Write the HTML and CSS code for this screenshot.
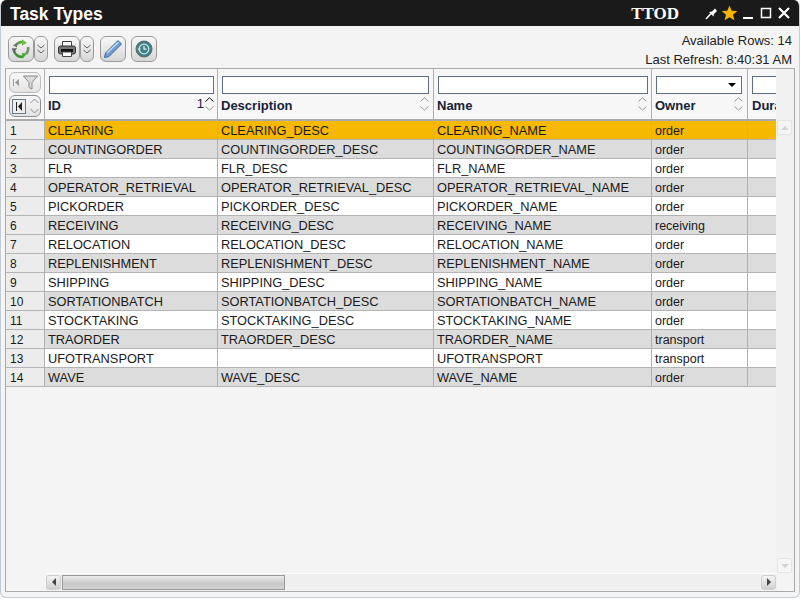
FILE: index.html
```html
<!DOCTYPE html>
<html lang="en">
<head>
<meta charset="utf-8">
<title>Task Types</title>
<link rel="stylesheet" href="styles.css">
</head>
<body>
<div class="window">
  <header class="titlebar">
    <span class="title">Task Types</span>
    <span class="tenant">TTOD</span>
    <div class="winbtns">
      <svg width="13" height="13" viewBox="0 0 13 13"><path d="M1 12 6 6.500" stroke="#fff" stroke-width="1.500"/><path d="M4 5 8.500 9.500 9 7 12 4 10 1.500 7 4.500z" fill="#fff"/></svg>
      <svg width="17" height="16" viewBox="0 0 17 16"><path d="M8.500 .5 10.700 5.700 16.300 6.100 12 9.700 13.400 15.200 8.500 12.200 3.600 15.200 5 9.700 .7 6.100 6.300 5.700z" fill="#f5b400"/></svg>
      <svg width="12" height="12" viewBox="0 0 12 12"><path d="M1 11h10" stroke="#fff" stroke-width="2"/></svg>
      <svg width="12" height="12" viewBox="0 0 12 12"><path d="M1.500 1.500h9v9h-9z" fill="none" stroke="#fff" stroke-width="1.500"/></svg>
      <svg width="12" height="12" viewBox="0 0 12 12"><path d="M1 1 11 11M11 1 1 11" stroke="#fff" stroke-width="2.200"/></svg>
    </div>
  </header>
  <div class="toolbar">
    <div class="tools">
      <div class="toolgroup">
        <button class="tbtn"><svg width="20" height="20" viewBox="0 0 20 20" fill="none" stroke-width="2.500"><path d="M5 6.500A7 7 0 0 1 12 3" stroke="#5aa83c"/><path d="M17 8A7.500 7.500 0 0 1 15 15" stroke="#7b8a78"/><path d="M12 17.500A7.500 7.500 0 0 1 3 12" stroke="#3f8f35"/><path d="M11 .3 16 4 11 6.500z" fill="#6cc04a" stroke="none"/><path d="M.5 9.500 6 9 3 14.500z" fill="#6d6d6d" stroke="none"/><path d="M11 14 16 14.500 11.500 19.700z" fill="#4aa83a" stroke="none"/><path d="M2 6.500 6 3.500 6 8.500z" fill="#6d7d68" stroke="none"/></svg></button>
        <button class="tmenu"><svg width="8" height="12" viewBox="0 0 8 12" fill="none" stroke="#666"><path d="M.5 2 4 5 7.500 2M.5 7 4 10 7.500 7"/></svg></button>
      </div>
      <div class="toolgroup">
        <button class="tbtn"><svg width="18" height="16" viewBox="0 0 18 16"><path d="M4.500 .5h9v5h-9z" fill="#fff" stroke="#444"/><rect x=".5" y="5" width="17" height="8" rx="2" fill="#777" stroke="#333"/><rect x="3" y="8" width="12" height="3" fill="#111"/><path d="M4.500 11h9v4.500h-9z" fill="#fff" stroke="#444"/></svg></button>
        <button class="tmenu"><svg width="8" height="12" viewBox="0 0 8 12" fill="none" stroke="#666"><path d="M.5 2 4 5 7.500 2M.5 7 4 10 7.500 7"/></svg></button>
      </div>
      <button class="tbtn"><svg width="20" height="20" viewBox="0 0 20 20"><path d="M15 1.500 18.500 5 6 17.500 1.500 18.500 2.500 14z" fill="#6f9fd0" stroke="#3f6a98"/><path d="M4 14 15.500 3" stroke="#cfe2f5" stroke-width="1.200"/></svg></button>
      <button class="tbtn tbtn-last"><svg width="18" height="18" viewBox="0 0 18 18"><circle cx="9" cy="9" r="8" fill="#3f7f86" stroke="#5d6a6e"/><circle cx="9" cy="9" r="4.800" fill="none" stroke="#cfe3e6" stroke-width="1.300"/><path d="M9 6v3.200h2.500" fill="none" stroke="#e8f2f3" stroke-width="1.200"/><path d="M2.500 8.500h3.500L4.200 11z" fill="#cfe3e6"/></svg></button>
    </div>
    <div class="status">
      <div>Available Rows: 14</div>
      <div>Last Refresh: 8:40:31 AM</div>
    </div>
  </div>
  <div class="panel">
    <div class="panel-top">
      <div class="viewport">
        <div class="row head">
          <div class="cell c0 headtools">
            <div class="hbtn hbtn-top">
              <svg width="8" height="9" viewBox="0 0 8 9"><path d="M1.500 1v7" stroke="#999"/><path d="M7 1v7L3 4.500z" fill="#999"/></svg>
              <svg width="15" height="15" viewBox="0 0 15 15"><path d="M.5 1h14L9 7.500V14L6 12.500v-5z" fill="#d8dcdc" stroke="#888"/></svg>
            </div>
            <div class="hbtn hbtn-bot">
              <span class="firstcol"><svg width="8" height="9" viewBox="0 0 8 9"><path d="M1.500 0v9" stroke="#222"/><path d="M7 0v9L3 4.500z" fill="#222"/></svg></span>
              <svg class="updown" width="9" height="16" viewBox="0 0 9 16" fill="none" stroke="#889"><path d="M.5 5 4.500 1 8.500 5M.5 11 4.500 15 8.500 11"/></svg>
            </div>
          </div>
          <div class="cell c1 hcell">
            <input class="filter" type="text" aria-label="ID filter">
            <div class="hlabel"><span>ID</span><span class="sortnum">1</span><svg class="sort" width="9" height="14" viewBox="0 0 9 14" fill="none"><path d="M.5 4.500 4.500 .8 8.500 4.500" stroke="#111"/><path d="M.5 9.500 4.500 13 8.500 9.500" stroke="#999"/></svg></div>
          </div>
          <div class="cell c2 hcell">
            <input class="filter" type="text" aria-label="Description filter">
            <div class="hlabel"><span>Description</span><svg class="sort" width="9" height="14" viewBox="0 0 9 14" fill="none" stroke="#999"><path d="M.5 4.500 4.500 .8 8.500 4.500M.5 9.500 4.500 13 8.500 9.500"/></svg></div>
          </div>
          <div class="cell c3 hcell">
            <input class="filter" type="text" aria-label="Name filter">
            <div class="hlabel"><span>Name</span><svg class="sort" width="9" height="14" viewBox="0 0 9 14" fill="none" stroke="#999"><path d="M.5 4.500 4.500 .8 8.500 4.500M.5 9.500 4.500 13 8.500 9.500"/></svg></div>
          </div>
          <div class="cell c4 hcell">
            <div class="filter select"><i class="caret"></i></div>
            <div class="hlabel"><span>Owner</span><svg class="sort" width="9" height="14" viewBox="0 0 9 14" fill="none" stroke="#999"><path d="M.5 4.500 4.500 .8 8.500 4.500M.5 9.500 4.500 13 8.500 9.500"/></svg></div>
          </div>
          <div class="cell c5 hcell">
            <input class="filter" type="text" aria-label="Duration filter">
            <div class="hlabel"><span>Duration</span></div>
          </div>
        </div>
        <div class="row sel"><div class="cell c0">1</div><div class="cell c1">CLEARING</div><div class="cell c2">CLEARING_DESC</div><div class="cell c3">CLEARING_NAME</div><div class="cell c4">order</div><div class="cell c5"></div></div>
        <div class="row alt"><div class="cell c0">2</div><div class="cell c1">COUNTINGORDER</div><div class="cell c2">COUNTINGORDER_DESC</div><div class="cell c3">COUNTINGORDER_NAME</div><div class="cell c4">order</div><div class="cell c5"></div></div>
        <div class="row"><div class="cell c0">3</div><div class="cell c1">FLR</div><div class="cell c2">FLR_DESC</div><div class="cell c3">FLR_NAME</div><div class="cell c4">order</div><div class="cell c5"></div></div>
        <div class="row alt"><div class="cell c0">4</div><div class="cell c1">OPERATOR_RETRIEVAL</div><div class="cell c2">OPERATOR_RETRIEVAL_DESC</div><div class="cell c3">OPERATOR_RETRIEVAL_NAME</div><div class="cell c4">order</div><div class="cell c5"></div></div>
        <div class="row"><div class="cell c0">5</div><div class="cell c1">PICKORDER</div><div class="cell c2">PICKORDER_DESC</div><div class="cell c3">PICKORDER_NAME</div><div class="cell c4">order</div><div class="cell c5"></div></div>
        <div class="row alt"><div class="cell c0">6</div><div class="cell c1">RECEIVING</div><div class="cell c2">RECEIVING_DESC</div><div class="cell c3">RECEIVING_NAME</div><div class="cell c4">receiving</div><div class="cell c5"></div></div>
        <div class="row"><div class="cell c0">7</div><div class="cell c1">RELOCATION</div><div class="cell c2">RELOCATION_DESC</div><div class="cell c3">RELOCATION_NAME</div><div class="cell c4">order</div><div class="cell c5"></div></div>
        <div class="row alt"><div class="cell c0">8</div><div class="cell c1">REPLENISHMENT</div><div class="cell c2">REPLENISHMENT_DESC</div><div class="cell c3">REPLENISHMENT_NAME</div><div class="cell c4">order</div><div class="cell c5"></div></div>
        <div class="row"><div class="cell c0">9</div><div class="cell c1">SHIPPING</div><div class="cell c2">SHIPPING_DESC</div><div class="cell c3">SHIPPING_NAME</div><div class="cell c4">order</div><div class="cell c5"></div></div>
        <div class="row alt"><div class="cell c0">10</div><div class="cell c1">SORTATIONBATCH</div><div class="cell c2">SORTATIONBATCH_DESC</div><div class="cell c3">SORTATIONBATCH_NAME</div><div class="cell c4">order</div><div class="cell c5"></div></div>
        <div class="row"><div class="cell c0">11</div><div class="cell c1">STOCKTAKING</div><div class="cell c2">STOCKTAKING_DESC</div><div class="cell c3">STOCKTAKING_NAME</div><div class="cell c4">order</div><div class="cell c5"></div></div>
        <div class="row alt"><div class="cell c0">12</div><div class="cell c1">TRAORDER</div><div class="cell c2">TRAORDER_DESC</div><div class="cell c3">TRAORDER_NAME</div><div class="cell c4">transport</div><div class="cell c5"></div></div>
        <div class="row"><div class="cell c0">13</div><div class="cell c1">UFOTRANSPORT</div><div class="cell c2"></div><div class="cell c3">UFOTRANSPORT</div><div class="cell c4">transport</div><div class="cell c5"></div></div>
        <div class="row alt"><div class="cell c0">14</div><div class="cell c1">WAVE</div><div class="cell c2">WAVE_DESC</div><div class="cell c3">WAVE_NAME</div><div class="cell c4">order</div><div class="cell c5"></div></div>
      </div>
      <div class="vscroll">
        <div class="vbtn"><i class="tri tri-up"></i></div>
        <div class="vbtn"><i class="tri tri-down"></i></div>
      </div>
    </div>
    <div class="hscroll">
      <div class="hbar">
        <div class="sbtn"><i class="tri tri-left"></i></div>
        <div class="thumb"></div>
        <div class="hspace"></div>
        <div class="sbtn"><i class="tri tri-right"></i></div>
      </div>
    </div>
  </div>
</div>
</body>
</html>
```
FILE: styles.css
```css
* { box-sizing: border-box; }
html, body { margin: 0; height: 100%; background: #fff; }
body { font: 12px "Liberation Sans", Arial, sans-serif; color: #1a1a1a; overflow: hidden; }
.window {
  width: 800px; height: 598px; display: flex; flex-direction: column;
  background: #f4f4f4; border: 1px solid #c3ccd2; border-top: 0; border-radius: 6px;
  overflow: hidden;
}
.titlebar {
  height: 26px; flex: none; background: #1a1a1a; color: #fff; display: flex; align-items: center;
  padding: 2px 9px 0 10px; margin: 0 -1px; font-weight: bold;
}
.title { font-size: 17.500px; }
.tenant { margin-left: auto; font: bold 17px "Liberation Serif", serif; }
.winbtns { display: flex; align-items: center; gap: 6px; margin-left: 26px; margin-right: 1px; margin-top: -2px; }
.winbtns svg:nth-child(2) { margin-left: -3px; }
.winbtns svg:nth-child(3) { margin-left: -2px; }
.toolbar { height: 42px; flex: none; display: flex; justify-content: space-between; padding: 10px 7px 0 7px; }
.tools { display: flex; gap: 6px; height: 26px; }
.toolgroup { display: flex; gap: 0; }
.tbtn, .tmenu {
  height: 26px; padding: 0; display: flex; align-items: center; justify-content: center;
  border: 1px solid #9a9a9a; border-radius: 6px;
  background: linear-gradient(#f8f8f8, #d6d6d6);
}
.tbtn { width: 26px; }
.tmenu { width: 14px; }
.tbtn-last { margin-left: -1px; }
.status { text-align: right; font-size: 13px; line-height: 19px; margin-top: -5px; color: #222; }
.panel { flex: 1; margin: 0 4px 5px 4px; border: 1px solid #aaa; display: flex; flex-direction: column; min-height: 0; background: #f4f4f4; }
.panel-top { flex: 1; min-height: 0; display: flex; }
.viewport { flex: 1; min-width: 0; overflow: hidden; }
.row { display: flex; height: 19px; width: 860px; background: #fff; border-bottom: 1px solid #b4b4b4; }
.row.alt { background: #dcdcdc; }
.row.sel { background: #f6b900; }
.row.head { height: 52px; background: #f7f7f7; border-bottom: 2px solid #aaa; }
.cell { flex: none; border-right: 1px solid #b0b0b0; padding: 1px 0 0 3px; line-height: 18px; font-size: 12.800px; white-space: nowrap; overflow: hidden; }
.c0 { width: 39px; padding-left: 4px; background: #ececec; font-size: 12px; }
.c1 { width: 173px; }
.c2 { width: 216px; }
.c3 { width: 218px; }
.c4 { width: 96px; padding-left: 3px; font-size: 12.500px; }
.c5 { width: 118px; }
.sel .c0 { background: #ececec; }
.head .cell { line-height: normal; background: #f7f7f7; }
.headtools { padding: 3px 3px 0 3px; display: flex; flex-direction: column; gap: 2px; }
.hbtn { height: 22px; width: 32px; border: 1px solid #bbb; border-radius: 6px; display: flex; align-items: center; justify-content: center; gap: 3px; background: linear-gradient(#f7f7f7, #e4e4e4); }
.hbtn-top { height: 21px; }
.hbtn-bot { border-color: #8a8f94; justify-content: flex-start; padding-left: 2px; gap: 4px; }
.firstcol { width: 14px; height: 15px; border: 1px solid #6b7a85; background: #eef0f0; display: flex; align-items: center; justify-content: center; }
.hcell { padding: 7px 3px 0 4px; }
.filter { display: block; width: 165px; height: 18px; border: 1px solid #5f6d82; background: #fff; padding: 0; margin: 0; border-radius: 0; }
.c2 .filter { width: 207px; }
.c3 .filter { width: 210px; }
.c4 .filter { width: 86px; display: flex; align-items: center; justify-content: flex-end; padding-right: 5px; }
.c5 .filter { width: 100px; }
.caret { width: 0; height: 0; border: 4px solid transparent; border-top: 4px solid #000; border-bottom: 0; }
.hlabel { display: flex; align-items: center; height: 18px; margin-top: 2px; font-weight: bold; font-size: 13px; color: #16243a; padding-right: 1px; }
.c1 .hlabel, .c2 .hlabel, .c3 .hlabel, .c4 .hlabel { margin-left: -1px; }
.c1 .hlabel { padding-right: 0; }
.hlabel .sort { margin-left: auto; margin-top: -2px; }
.sortnum { margin-left: auto; font-weight: normal; font-size: 13px; margin-top: -3px; margin-right: 1px; }
.sortnum + .sort { margin-left: 0; }
.vscroll { width: 18px; flex: none; display: flex; flex-direction: column; justify-content: space-between; padding: 51px 1px 0 0; background: #f1f1f1; }
.vbtn { width: 15px; height: 15px; margin-left: 1px; border: 1px solid #e4e4e4; background: #f5f5f5; display: flex; align-items: center; justify-content: center; border-radius: 2px; }
.hscroll { height: 18px; flex: none; padding-left: 40px; }
.hbar { height: 17px; display: flex; align-items: center; border-top: 1px solid #fff; background: #efefef; margin-right: 17px; padding-right: 1px; }
.sbtn { width: 15px; height: 15px; border: 1px solid #d0d0d0; border-radius: 3px; background: linear-gradient(#f4f4f4, #cfcfcf); display: flex; align-items: center; justify-content: center; flex: none; }
.thumb { width: 223px; height: 15px; margin-left: 1px; border: 1px solid #999; background: linear-gradient(#ececec, #c8c8c8 60%, #d4d4d4); flex: none; }
.hspace { flex: 1; }
.tri { display: block; width: 0; height: 0; border: 4px solid transparent; }
.tri-up { border-top: 0; border-bottom: 4px solid #d2d2d2; }
.tri-down { border-bottom: 0; border-top: 4px solid #d2d2d2; }
.tri-left { border-left: 0; border-right: 4px solid #444; }
.tri-right { border-right: 0; border-left: 4px solid #444; }
```
